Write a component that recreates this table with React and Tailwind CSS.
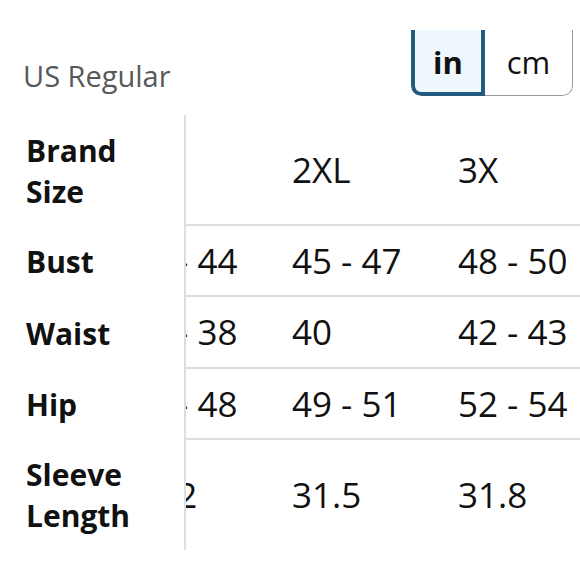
import React from "react";

const rows = [
  { label: ["Brand", "Size"], h: "h-[111px]", cells: ["XL", "2XL", "3X", "4X"] },
  { label: ["Bust"], h: "h-[71px]", cells: ["42 - 44", "45 - 47", "48 - 50", "51 - 53"] },
  { label: ["Waist"], h: "h-[72px]", cells: ["35 - 38", "40", "42 - 43", "44 - 46"] },
  { label: ["Hip"], h: "h-[71px]", cells: ["45 - 48", "49 - 51", "52 - 54", "55 - 57"] },
  { label: ["Sleeve", "Length"], h: "h-[110px]", cells: ["31.2", "31.5", "31.8", "32.1"] },
];

const UnitToggle = () => (
  <div className="mt-[30px] mr-[7px] h-[66px] w-[162px] overflow-hidden rounded-b-[10px]">
    <div className="-mt-[10px] flex h-[76px]">
      <div className="flex w-[74px] items-center justify-center rounded-l-[10px] border-[4px] border-[#235a80] bg-[#eef7fb] pt-[8px] text-[31px] font-bold text-[#111]">
        in
      </div>
      <div className="flex flex-1 items-center justify-center rounded-r-[10px] border border-l-0 border-[#9a9a9a] bg-white pt-[8px] text-[31px] text-[#111]">
        cm
      </div>
    </div>
  </div>
);

export default function App() {
  return (
    <div className="h-[580px] w-[580px] overflow-hidden bg-white font-['Open_Sans',sans-serif]">
      {/* Header */}
      <div className="flex h-[115px] items-start justify-between">
        <div className="mt-[56px] pl-[23px] text-[29px] leading-[40px] text-[#565959]">
          US Regular
        </div>
        <UnitToggle />
      </div>

      {/* Size table, scrolled sideways a little */}
      <div className="flex">
        <div className="w-[184px] shrink-0 pl-[26px]">
          {rows.map((r) => (
            <div
              key={r.label.join(" ")}
              className={`${r.h} flex flex-col justify-center text-[30px] font-bold leading-[41px] text-[#111]`}
            >
              {r.label.map((l) => (
                <span key={l}>{l}</span>
              ))}
            </div>
          ))}
        </div>
        <div className="flex-1 overflow-hidden border-l-2 border-[#dedede]">
          <div className="-ml-[58px]">
            {rows.map((r, i) => (
              <div
                key={r.label.join(" ")}
                className={`${r.h} flex items-center ${i < rows.length - 1 ? "border-b-2 border-[#dedede]" : ""}`}
              >
                {r.cells.map((c, j) => (
                  <div
                    key={c}
                    className={`${j === 0 ? "w-[164px]" : "w-[166px]"} shrink-0 whitespace-nowrap text-[35px] leading-[44px] text-[#111]`}
                  >
                    {c}
                  </div>
                ))}
              </div>
            ))}
          </div>
        </div>
      </div>
    </div>
  );
}
